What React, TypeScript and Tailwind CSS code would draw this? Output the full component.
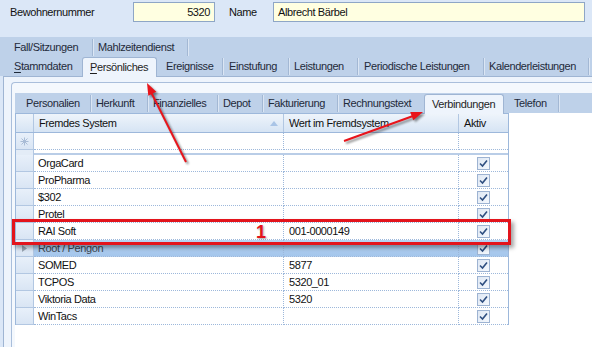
import React from "react";

type Tab = { label: string; w: number; pl: number; sep?: boolean; sel?: boolean; ul?: boolean };

function TabItem({ t, h }: { t: Tab; h: string }) {
  const first = t.ul ? (
    <>
      <span className="underline underline-offset-2">{t.label[0]}</span>
      {t.label.slice(1)}
    </>
  ) : (
    t.label
  );
  if (t.sel) {
    return (
      <div
        className={`relative z-10 ${h} self-end mb-[-1px] flex items-center whitespace-nowrap rounded-t-[3px] border border-b-0 border-[#9fb5d3] bg-[#eef4fc] text-[#1e1e1e]`}
        style={{ width: t.w, paddingLeft: t.pl }}
      >
        {first}
      </div>
    );
  }
  return (
    <div className="flex h-full items-center">
      <div
        className="flex h-full items-center whitespace-nowrap text-[#1e2a3a]"
        style={{ width: t.w, paddingLeft: t.pl }}
      >
        {first}
      </div>
      {t.sep && <div className="h-[17px] w-[1px] bg-[#a3b8d4] shadow-[1px_0_0_#dbe6f4]" />}
    </div>
  );
}

const row1: Tab[] = [
  { label: "Fall/Sitzungen", w: 88, pl: 10, sep: true },
  { label: "Mahlzeitendienst", w: 94, pl: 5, sep: true },
];
const row2: Tab[] = [
  { label: "Stammdaten", w: 78, pl: 10, ul: true },
  { label: "Persönliches", w: 75, pl: 7, sel: true, ul: true },
  { label: "Ereignisse", w: 65, pl: 9, sep: true },
  { label: "Einstufung", w: 65, pl: 6, sep: true },
  { label: "Leistungen", w: 68, pl: 5, sep: true },
  { label: "Periodische Leistungen", w: 125, pl: 6, sep: true },
  { label: "Kalenderleistungen", w: 104, pl: 5, sep: true },
];
const inner: Tab[] = [
  { label: "Personalien", w: 75, pl: 11, sep: true },
  { label: "Herkunft", w: 56, pl: 5, sep: true },
  { label: "Finanzielles", w: 69, pl: 5, sep: true },
  { label: "Depot", w: 44, pl: 5, sep: true },
  { label: "Fakturierung", w: 74, pl: 5, sep: true },
  { label: "Rechnungstext", w: 86, pl: 5 },
  { label: "Verbindungen", w: 80, pl: 7, sel: true },
  { label: "Telefon", w: 54, pl: 10, sep: true },
];

const rows: { a: string; b: string; sel?: boolean }[] = [
  { a: "OrgaCard", b: "" },
  { a: "ProPharma", b: "" },
  { a: "$302", b: "" },
  { a: "Protel", b: "" },
  { a: "RAI Soft", b: "001-0000149" },
  { a: "Root / Pengon", b: "", sel: true },
  { a: "SOMED", b: "5877" },
  { a: "TCPOS", b: "5320_01" },
  { a: "Viktoria Data", b: "5320" },
  { a: "WinTacs", b: "" },
];

function Check() {
  return (
    <div className="flex h-[13px] w-[13px] items-center justify-center border border-[#9db3d2] bg-gradient-to-br from-[#dfe8f4] to-[#f4f8fd]">
      <svg width="9" height="9" viewBox="0 0 9 9">
        <path d="M1 4.5 L3.5 7 L8 1.5" fill="none" stroke="#2f4f80" strokeWidth="1.6" />
      </svg>
    </div>
  );
}

function Selector({ children }: { children?: React.ReactNode }) {
  return (
    <div className="flex h-full w-[18px] shrink-0 items-center justify-center border-r border-b border-[#b2c7e2] bg-gradient-to-b from-[#e8f0fa] to-[#d9e5f4]">
      {children}
    </div>
  );
}

export default function App() {
  return (
    <div className="relative flex h-[347px] w-[592px] flex-col overflow-hidden bg-[#dbe7f7] font-['Liberation_Sans',Arial,sans-serif] text-[11px] leading-none tracking-[-0.4px] text-[#111]">
      {/* header fields */}
      <div className="flex h-[37px] shrink-0 items-start pl-[10px] pt-[2px]">
        <div className="flex h-[20px] w-[123px] items-center">Bewohnernummer</div>
        <div className="flex h-[20px] w-[82px] items-center justify-end border border-[#8ea6c6] bg-[#ffffe1] pr-[4px]">5320</div>
        <div className="flex h-[20px] w-[58px] items-center pl-[14px]">Name</div>
        <div className="flex h-[20px] w-[312px] items-center border border-[#8ea6c6] bg-[#ffffe1] pl-[4px]">Albrecht Bärbel</div>
      </div>

      {/* outer tab band */}
      <div className="flex h-[39px] shrink-0 flex-col bg-[#bed1e9] pl-[4px]">
        <div className="flex h-[20px] items-end">
          {row1.map((t) => (
            <TabItem key={t.label} t={t} h="h-[20px]" />
          ))}
        </div>
        <div className="flex h-[19px] items-end">
          {row2.map((t) => (
            <TabItem key={t.label} t={t} h="h-[20px]" />
          ))}
        </div>
      </div>

      {/* outer panel */}
      <div className="ml-[3px] flex flex-1 flex-col border-l border-t border-[#9fb5d3] bg-[#eef4fc] pl-[7px] pt-[5px]">
        <div className="flex flex-1 flex-col rounded-tl-[4px] border-l border-t border-[#a9bedb] bg-[#f4f8fd] pl-[3px] pt-[10px]">
          {/* inner tab band */}
          <div className="flex h-[20px] shrink-0 items-end bg-[#bed1e9]">
            {inner.map((t) => (
              <TabItem key={t.label} t={t} h="h-[20px]" />
            ))}
          </div>
          {/* tab page */}
          <div className="flex-1 bg-white">
            <div className="w-[494px] border-x border-t border-[#9db8db]">
              {/* header */}
              <div className="flex h-[19px] border-b border-[#9db8db] bg-gradient-to-b from-[#eef4fb] to-[#d6e4f4]">
                <div className="w-[18px] border-r border-[#b2c7e2]" />
                <div className="relative flex w-[250px] items-center border-r border-[#b2c7e2] pl-[5px]">
                  Fremdes System
                  <svg className="absolute left-[236px] top-[7px]" width="8" height="5" viewBox="0 0 8 5">
                    <path d="M0 5 L4 0 L8 5 Z" fill="#a9c4e6" />
                  </svg>
                </div>
                <div className="flex w-[175px] items-center border-r border-[#b2c7e2] pl-[5px]">Wert im Fremdsystem</div>
                <div className="flex w-[49px] items-center pl-[5px]">Aktiv</div>
              </div>
              {/* new row */}
              <div className="flex h-[17px]">
                <Selector>
                  <svg width="9" height="9" viewBox="0 0 9 9">
                    <g stroke="#a9bcd6" strokeWidth="1">
                      <line x1="4.5" y1="0.5" x2="4.5" y2="8.5" />
                      <line x1="0.5" y1="4.5" x2="8.5" y2="4.5" />
                      <line x1="1.5" y1="1.5" x2="7.5" y2="7.5" />
                      <line x1="7.5" y1="1.5" x2="1.5" y2="7.5" />
                    </g>
                  </svg>
                </Selector>
                <div className="w-[250px] border-b border-r border-dotted border-[#9db8db]" />
                <div className="w-[175px] border-b border-r border-dotted border-[#9db8db]" />
                <div className="w-[49px] border-b border-dotted border-[#9db8db]" />
              </div>
              <div className="flex h-[5px]">
                <div className="w-[18px] border-r border-[#b2c7e2] bg-[#e3ecf7]" />
                <div className="flex-1 border-b-2 border-[#b9cde7]" />
              </div>
              {/* data rows */}
              {rows.map((r) => (
                <div key={r.a} className={`flex h-[17px] ${r.sel ? "text-[#3c4650]" : ""}`}>
                  <Selector>
                    {r.sel && (
                      <svg width="5" height="7" viewBox="0 0 5 7">
                        <path d="M0 0 L5 3.5 L0 7 Z" fill="#9aa6b4" />
                      </svg>
                    )}
                  </Selector>
                  <div className={`flex w-[250px] items-center border-b border-r border-dotted border-[#9db8db] pl-[4px] ${r.sel ? "bg-gradient-to-b from-[#b7d3f2] to-[#a4c6ec]" : ""}`}>
                    {r.a}
                  </div>
                  <div className={`flex w-[175px] items-center border-b border-r border-dotted border-[#9db8db] pl-[5px] ${r.sel ? "bg-gradient-to-b from-[#b7d3f2] to-[#a4c6ec]" : ""}`}>
                    {r.b}
                  </div>
                  <div className={`flex w-[49px] items-center border-b border-dotted border-[#9db8db] pl-[18px] ${r.sel ? "bg-gradient-to-b from-[#b7d3f2] to-[#a4c6ec]" : ""}`}>
                    <Check />
                  </div>
                </div>
              ))}
            </div>
          </div>
        </div>
      </div>

      {/* annotations */}
      <div className="absolute left-[12px] top-[219px] h-[26px] w-[499px] border-[3px] border-[#e3141c] shadow-[3px_3px_4px_rgba(0,0,0,0.35)]" />
      <div className="absolute left-[256px] top-[223px] text-[18px] font-bold leading-none tracking-normal text-[#e3141c] [text-shadow:1px_1px_2px_rgba(0,0,0,0.35)]">1</div>
      <svg className="pointer-events-none absolute left-0 top-0" width="592" height="347" viewBox="0 0 592 347">
        <defs>
          <filter id="sh" x="-20%" y="-20%" width="140%" height="140%">
            <feGaussianBlur stdDeviation="1.2" />
          </filter>
        </defs>
        <g transform="translate(2,2)" filter="url(#sh)" opacity="0.45">
          <line x1="186" y1="162" x2="151" y2="92" stroke="#000" strokeWidth="2" />
          <path d="M147 83 L156.3 91.8 L148.3 95.8 Z" fill="#000" />
          <line x1="344" y1="141" x2="413" y2="116" stroke="#000" strokeWidth="2" />
          <path d="M423 112 L413.3 120.3 L410.2 111.9 Z" fill="#000" />
        </g>
        <line x1="186" y1="162" x2="151" y2="92" stroke="#e8141b" strokeWidth="2" />
        <path d="M147 83 L156.3 91.8 L148.3 95.8 Z" fill="#e8141b" />
        <line x1="344" y1="141" x2="413" y2="116" stroke="#e8141b" strokeWidth="2" />
        <path d="M423 112 L413.3 120.3 L410.2 111.9 Z" fill="#e8141b" />
      </svg>
    </div>
  );
}
